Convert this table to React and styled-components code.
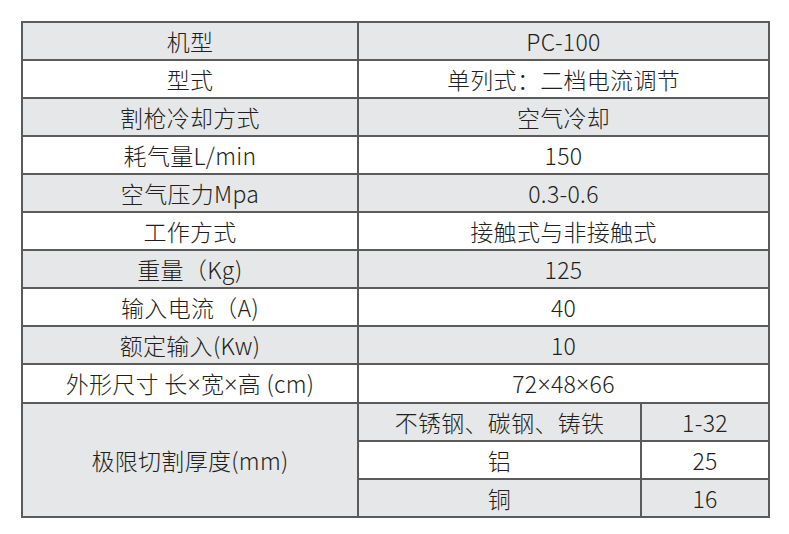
import React from "react";
import styled, { createGlobalStyle } from "styled-components";

const Times = styled.span`
  font-family: "Noto Sans", "Liberation Sans", sans-serif;
`;

const rows = [
  ["机型", "PC-100"],
  ["型式", "单列式：二档电流调节"],
  ["割枪冷却方式", "空气冷却"],
  ["耗气量L/min", "150"],
  ["空气压力Mpa", "0.3-0.6"],
  ["工作方式", "接触式与非接触式"],
  ["重量（Kg)", "125"],
  ["输入电流（A)", "40"],
  ["额定输入(Kw)", "10"],
  [
    <>
      外形尺寸 长<Times>×</Times>宽<Times>×</Times>高 (cm)
    </>,
    <>
      72<Times>×</Times>48<Times>×</Times>66
    </>,
  ],
];

const thickness = [
  ["不锈钢、碳钢、铸铁", "1-32"],
  ["铝", "25"],
  ["铜", "16"],
];

const App = () => {
  return (
    <Page>
      <GlobalStyle />
      <Table>
        <colgroup>
          <col style={{ width: 336 }} />
          <col style={{ width: 283 }} />
          <col style={{ width: 128 }} />
        </colgroup>
        <tbody>
          {rows.map(([label, value], i) => (
            <tr key={i}>
              <Cell $shaded={i % 2 === 0}>{label}</Cell>
              <Cell $shaded={i % 2 === 0} colSpan={2}>
                {value}
              </Cell>
            </tr>
          ))}
          {thickness.map(([metal, mm], i) => (
            <tr key={metal}>
              {i === 0 && (
                <Cell $shaded rowSpan={3}>
                  极限切割厚度(mm)
                </Cell>
              )}
              <Cell $shaded={i % 2 === 0}>{metal}</Cell>
              <Cell $shaded={i % 2 === 0}>{mm}</Cell>
            </tr>
          ))}
        </tbody>
      </Table>
    </Page>
  );
};

export default App;

const GlobalStyle = createGlobalStyle`
  body {
    margin: 0;
    background: #fff;
  }
`;

const Page = styled.div`
  padding: 21px 0 0 21px;
`;

const Table = styled.table`
  border-collapse: collapse;
  table-layout: fixed;
  width: 747px;
  font-family: "Noto Sans CJK SC", "Noto Sans", sans-serif;
  font-size: 23px;
  font-weight: 300;
  letter-spacing: 0.3px;
  color: #231f20;
`;

const Cell = styled.td`
  height: 36px;
  padding: 0;
  text-align: center;
  vertical-align: middle;
  line-height: 36px;
  border: 2px solid #5b5b5c;
  background: ${(p) => (p.$shaded ? "#e6e7e8" : "#fff")};
  white-space: nowrap;
`;
